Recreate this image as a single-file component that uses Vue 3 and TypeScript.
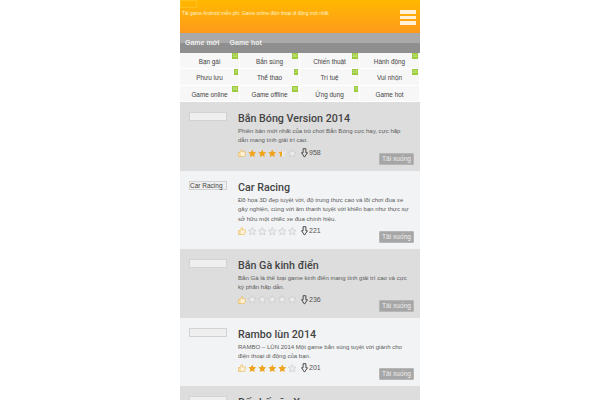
<script setup lang="ts">
const cats = [
  { n: 'Bạn gái', b: '11' }, { n: 'Bắn súng', b: '30' }, { n: 'Chiến thuật', b: '44' }, { n: 'Hành động', b: '11' },
  { n: 'Phưu lưu', b: '3' }, { n: 'Thể thao', b: '2' }, { n: 'Trí tuệ', b: '13' }, { n: 'Vui nhộn', b: '20' },
  { n: 'Game online', b: '34' }, { n: 'Game offline', b: '30' }, { n: 'Ứng dụng', b: '3' }, { n: 'Game hot', b: '' },
]
const items = [
  { t: 'Bắn Bóng Version 2014', d: 'Phiên bản mới nhất của trò chơi Bắn Bóng cực hay, cực hấp dẫn mang tính giải trí cao.', r: 3.5, c: '958', img: '', dk: true },
  { t: 'Car Racing', d: 'Đồ họa 3D đẹp tuyệt vời, độ trung thực cao và lối chơi đua xe gây nghiện, cùng với âm thanh tuyệt vời khiến bạn như thực sự sở hữu một chiếc xe đua chính hiệu.', r: 0, c: '221', img: 'Car Racing', dk: false },
  { t: 'Bắn Gà kinh điển', d: 'Bắn Gà là thể loại game kinh điển mang tính giải trí cao và cực kỳ phấn hấp dẫn.', r: 0, c: '236', img: '', dk: true },
  { t: 'Rambo lùn 2014', d: 'RAMBO – LÙN 2014 Một game bắn súng tuyệt vời giành cho điện thoại di động của bạn.', r: 4, c: '201', img: '', dk: false },
  { t: 'Đế chế săn Xe', d: '', r: 0, c: '', img: '', dk: true },
]
const star = 'M5 .6 6.4 3.5 9.6 3.9 7.3 6.1 7.9 9.3 5 7.8 2.1 9.3 2.7 6.1.4 3.9 3.6 3.5Z'
</script>

<template>
  <div class="page">
    <header class="top">
      <div class="logo"></div>
      <p class="slogan">Tải game Android miễn phí. Game online điện thoại di động mới nhất</p>
      <div class="burger"><i></i><i></i><i></i></div>
    </header>
    <nav class="tabs"><span>Game mới</span><span>Game hot</span></nav>
    <div class="cats">
      <a v-for="c in cats" :key="c.n" class="cat">
        {{ c.n }}
        <b v-if="c.b" class="badge">{{ c.b }}</b>
      </a>
    </div>
    <article v-for="it in items" :key="it.t" class="item" :class="{ dark: it.dk }">
      <div class="thumb">{{ it.img }}</div>
      <div class="body">
        <h2>{{ it.t }}</h2>
        <p v-if="it.d" class="desc">{{ it.d }}</p>
        <div v-if="it.c" class="meta">
          <svg class="thumbup" viewBox="0 0 10 10" width="8" height="8">
            <path d="M.5 4.5H2.5V9.5H.5ZM2.5 4.5 4.6.6C5.6.6 5.9 1.5 5.6 2.4L5.3 3.6H9C9.6 3.6 9.7 4.4 9.4 4.8L8.2 9C8 9.4 7.7 9.5 7.3 9.5H2.5" fill="#fff3d8" stroke="#e9b04a" stroke-width=".8"/>
          </svg>
          <svg v-for="n in 5" :key="n" class="star" viewBox="0 0 10 10" width="8.5" height="8.5">
            <defs>
              <linearGradient :id="'half' + it.t.length + n"><stop offset="50%" stop-color="#f0a31c"/><stop offset="50%" stop-color="#ececec"/></linearGradient>
            </defs>
            <path :d="star" :fill="it.r >= n ? '#f0a31c' : it.r > n - 1 ? `url(#half${it.t.length}${n})` : '#ececec'" :stroke="it.r > n - 1 ? 'none' : '#bdbdbd'" stroke-width=".6"/>
          </svg>
          <svg class="down" viewBox="0 0 8 11" width="7" height="10">
            <path d="M2.4.6H5.6V5.2H7.4L4 10.2.6 5.2H2.4Z" fill="none" stroke="#444" stroke-width="1.1" stroke-linejoin="round"/>
          </svg>
          <span class="count">{{ it.c }}</span>
        </div>
      </div>
      <button v-if="it.c" class="dl">Tải xuống</button>
    </article>
  </div>
</template>

<style>
html, body { background: #fff; overflow: hidden; }
</style>

<style scoped>
.page { width: 240px; height: 400px; margin-left: 180px; overflow: hidden; font-family: "Liberation Sans", Arial, sans-serif; color: #444; }
.top { height: 33px; box-sizing: border-box; background: linear-gradient(#ffb800, #ff9a1c); display: flex; justify-content: space-between; padding: 8px 0 0 2px; position: relative; }
.logo { position: absolute; left: 0; top: 0; width: 17px; height: 8px; border: 1px solid #ffbf1c; box-sizing: border-box; }
.slogan { margin: 1.5px 0 0; font-size: 4.8px; line-height: 7px; color: #fff3d0; }
.burger { width: 16px; margin-right: 4px; margin-top: 2px; display: flex; flex-direction: column; gap: 1.8px; }
.burger i { display: block; height: 3.8px; background: #fff0d8; }
.tabs { height: 20px; box-sizing: border-box; background: linear-gradient(#a9a9a9 0 50%, #8f8f8f 50%); display: flex; gap: 10px; padding: 4px 0 0 5px; font-size: 7px; line-height: 11px; font-weight: bold; color: #eee; }
.cats { display: grid; grid-template-columns: repeat(4, 1fr); grid-auto-rows: 16.3px; height: 49px; background: #f6f6f6; }
.cat { position: relative; font-size: 6.4px; line-height: 18px; text-align: center; color: #444; background: #f7f7f7; border-bottom: 1px solid #fff; border-right: 1px solid #fff; box-sizing: border-box; }
.badge { position: absolute; top: 0; right: 1px; height: 6px; padding: 0 .8px; min-width: 2px; background: #9ccb3b; color: #e8f4c8; font-size: 4px; line-height: 6px; font-weight: normal; }
.item { display: flex; position: relative; background: #f2f3f4; padding: 3px 6px 14.9px 9px; }
.item.dark { background: #dddddd; }
.thumb { width: 38px; height: 9px; flex: none; margin-top: 7px; box-sizing: border-box; border: 1px solid #d2d2d2; background: #efefef; font-size: 6.5px; line-height: 7px; color: #444; white-space: nowrap; }
.body { margin-left: 11px; flex: 1; min-width: 0; }
h2 { margin: 7px 0 0; font-family: Roboto, "Liberation Sans", sans-serif; font-size: 10.7px; line-height: 14px; font-weight: 500; color: #444; white-space: nowrap; }
.desc { margin: 1px 0 0; max-width: 172px; font-size: 6.05px; line-height: 9.4px; color: #5c5c5c; }
.meta { display: flex; align-items: center; height: 10px; margin-top: 2px; margin-bottom: -2px; }
.thumbup { margin-right: 1.5px; }
.star { margin-right: 1.5px; }
.down { margin-left: 3px; margin-right: 1.5px; }
.count { font-size: 7px; line-height: 10px; color: #555; }
.dl { position: absolute; right: 6px; bottom: 6px; width: 35px; height: 12px; box-sizing: border-box; padding: 0; border: 1px solid #b6b6b6; border-radius: 1px; background: #a6a6a6; color: #eee; font: 6.6px/10px "Liberation Sans", Arial, sans-serif; }
</style>
